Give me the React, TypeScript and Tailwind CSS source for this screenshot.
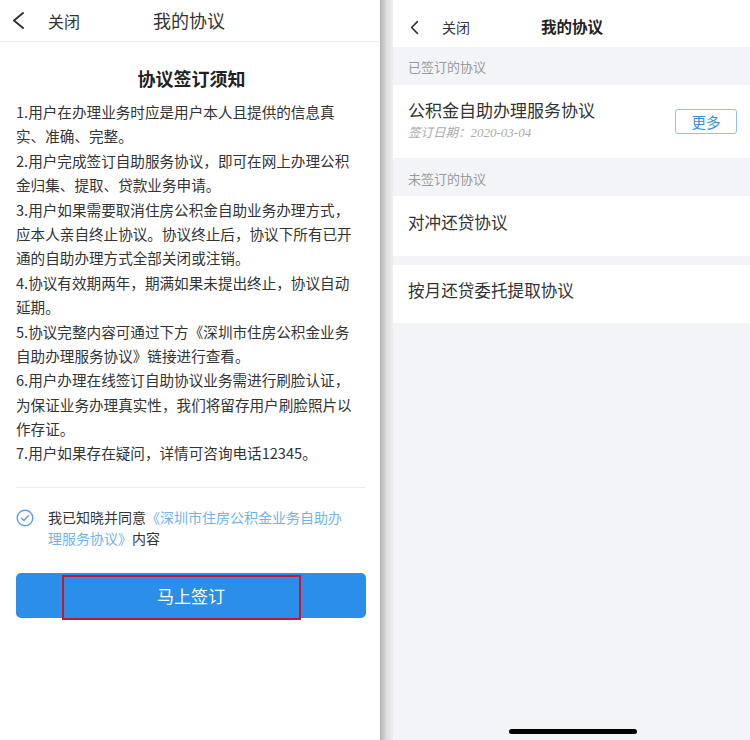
import React from "react";

const paragraphs: string[][] = [
  ["1.用户在办理业务时应是用户本人且提供的信息真", "实、准确、完整。"],
  ["2.用户完成签订自助服务协议，即可在网上办理公积", "金归集、提取、贷款业务申请。"],
  ["3.用户如果需要取消住房公积金自助业务办理方式，", "应本人亲自终止协议。协议终止后，协议下所有已开", "通的自助办理方式全部关闭或注销。"],
  ["4.协议有效期两年，期满如果未提出终止，协议自动", "延期。"],
  ["5.协议完整内容可通过下方《深圳市住房公积金业务", "自助办理服务协议》链接进行查看。"],
  ["6.用户办理在线签订自助协议业务需进行刷脸认证，", "为保证业务办理真实性，我们将留存用户刷脸照片以", "作存证。"],
  ["7.用户如果存在疑问，详情可咨询电话12345。"],
];

function Chevron({ w, h, stroke }: { w: number; h: number; stroke: number }) {
  return (
    <svg width={w} height={h} viewBox={`0 0 ${w} ${h}`} fill="none">
      <polyline
        points={`${w - stroke},${stroke} ${stroke},${h / 2} ${w - stroke},${h - stroke}`}
        stroke="#333333"
        strokeWidth={stroke}
        strokeLinecap="round"
        strokeLinejoin="round"
      />
    </svg>
  );
}

function LeftPanel() {
  return (
    <div className="relative w-[380px] h-full bg-white flex flex-col shrink-0">
      <div className="h-[42px] flex items-center pl-[12px] border-b border-[#f0f0f0]">
        <Chevron w={13} h={19} stroke={2} />
        <span className="ml-[23px] text-[16px] text-[#333]">关闭</span>
        <span className="ml-[73px] text-[18px] text-[#333]">我的协议</span>
      </div>
      <div className="mt-[23px] h-[26px] leading-[26px] text-center text-[18px] font-bold text-[#222] pl-[3px]">
        协议签订须知
      </div>
      <div className="mt-[9px] pl-[16px] text-[14.6px] text-[#333]">
        {paragraphs.map((p, i) => (
          <div key={i}>
            {p.map((l, j) => (
              <div key={j} className="h-[24.4px] leading-[24.4px] whitespace-nowrap">
                {l}
              </div>
            ))}
          </div>
        ))}
      </div>
      <div className="mt-[21px] ml-[16px] mr-[14px] h-px bg-[#ececec]" />
      <div className="mt-[19px] flex pl-[16px] pr-[20px]">
        <div className="pt-[2px] shrink-0">
          <svg width="18" height="18" viewBox="0 0 18 18" fill="none">
            <circle cx="9" cy="9" r="7.8" stroke="#5d9fdc" strokeWidth="1.4" />
            <polyline
              points="5.6,9.2 8,11.4 12.4,6.8"
              stroke="#5d9fdc"
              strokeWidth="1.4"
              strokeLinecap="round"
              strokeLinejoin="round"
            />
          </svg>
        </div>
        <div className="ml-[14px] text-[14px] text-[#333]">
          <div className="h-[21px] leading-[21px] whitespace-nowrap">
            我已知晓并同意<span className="text-[#72b4ea]">《深圳市住房公积金业务自助办</span>
          </div>
          <div className="h-[21px] leading-[21px] whitespace-nowrap">
            <span className="text-[#72b4ea]">理服务协议》</span>内容
          </div>
        </div>
      </div>
      <div className="mt-[24px] ml-[16px] mr-[14px] h-[45px] rounded-[5px] bg-[#2b8ee8] flex items-center justify-center text-white text-[17px]">
        马上签订
      </div>
      <div className="absolute left-[62px] top-[575px] w-[239px] h-[45px] border-2 border-[#c8162f]" />
    </div>
  );
}

function RightPanel() {
  return (
    <div className="relative flex-1 h-full bg-[#f3f4f8] flex flex-col">
      <div className="h-[47px] bg-white flex items-center pt-[7px] pl-[17px]">
        <Chevron w={9} h={15} stroke={1.6} />
        <span className="ml-[23px] text-[14px] text-[#333]">关闭</span>
        <span className="ml-[71px] text-[15.5px] font-bold text-[#222]">我的协议</span>
      </div>
      <div className="h-[38px] pt-[10px] pl-[15px] text-[13px] leading-[20px] text-[#9a9a9a]">已签订的协议</div>
      <div className="h-[73px] bg-white flex items-start justify-between pl-[15px] pr-[13px]">
        <div className="pt-[13px]">
          <div className="h-[24px] text-[17px] leading-[24px] text-[#333]">公积金自助办理服务协议</div>
          <div className="mt-[1px] h-[18px] text-[12.5px] leading-[18px] italic text-[#ababab]">
            签订日期：<span className="font-['Liberation_Serif',serif] text-[13px]">2020-03-04</span>
          </div>
        </div>
        <div className="mt-[24px] w-[62px] h-[25px] rounded-[3px] border border-[#8fc2ec] flex items-center justify-center text-[14.5px] text-[#3a8fe0]">
          更多
        </div>
      </div>
      <div className="h-[38px] pt-[11px] pl-[15px] text-[13px] leading-[20px] text-[#9a9a9a]">未签订的协议</div>
      <div className="h-[60px] bg-white pl-[15px] pt-[13px] text-[16.6px] leading-[26px] text-[#333]">对冲还贷协议</div>
      <div className="h-[9px]" />
      <div className="h-[58px] bg-white pl-[15px] pt-[12px] text-[16.6px] leading-[26px] text-[#333]">按月还贷委托提取协议</div>
      <div className="absolute left-[116px] bottom-[6px] w-[128px] h-[5px] rounded-full bg-black" />
    </div>
  );
}

export default function App() {
  return (
    <div className="flex w-[750px] h-[740px] overflow-hidden bg-white font-['Noto_Sans_CJK_SC','Noto_Sans',sans-serif]">
      <LeftPanel />
      <div className="w-[13px] h-full shrink-0 bg-gradient-to-r from-[#b3b3b3] via-[#dedede] to-[#efefef]" />
      <RightPanel />
    </div>
  );
}
